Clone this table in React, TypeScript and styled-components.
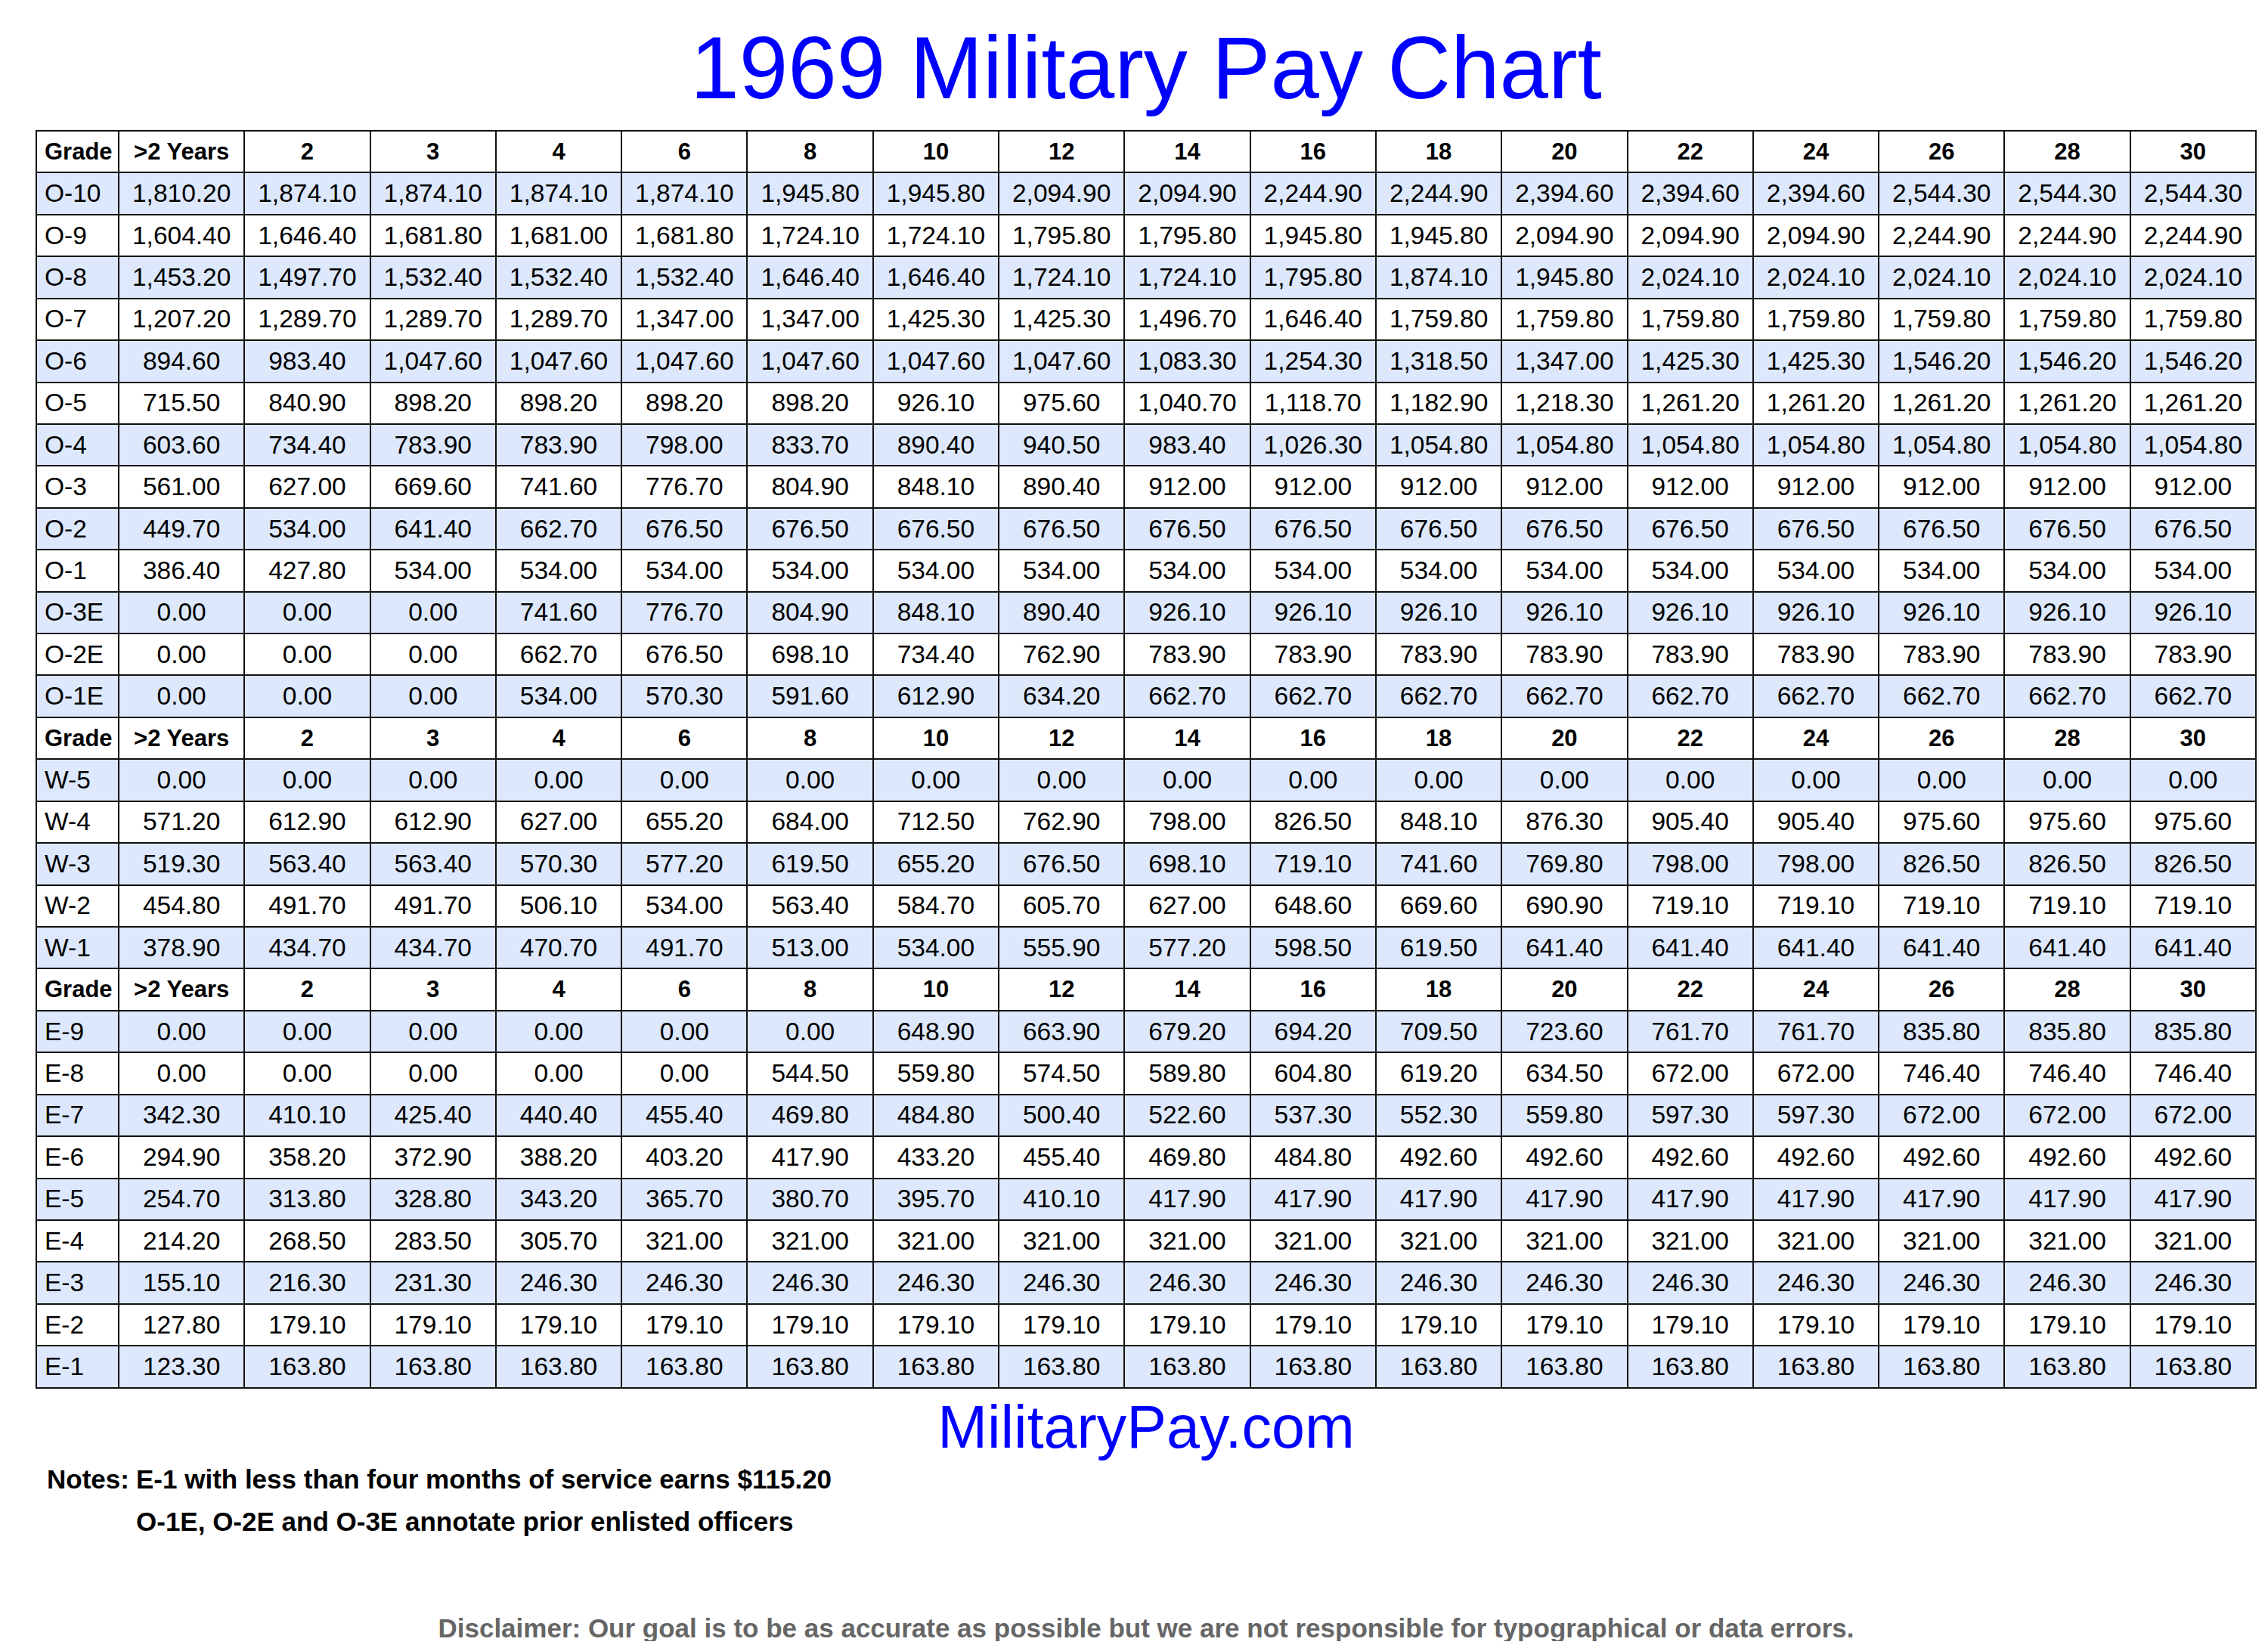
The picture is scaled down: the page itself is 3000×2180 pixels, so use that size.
import React from 'react';
import styled, { createGlobalStyle } from 'styled-components';

const GlobalStyle = createGlobalStyle`
    html, body {
        margin: 0;
        padding: 0;
        background: #fff;
    }
    body {
        font-family: "Liberation Sans", Arial, sans-serif;
        color: #000;
    }
`;

const Page = styled.div`
    width: 2938px;
    margin-left: 47px;
    padding-top: 32px;
`;

const Title = styled.h1`
    margin: 0 0 24px;
    font-size: 116px;
    line-height: 116px;
    font-weight: 400;
    text-align: center;
    color: #0000ff;
`;

const Chart = styled.div`
    border-top: 2px solid #111;
    border-left: 2px solid #111;
`;

const Row = styled.div<{ $shaded?: boolean }>`
    display: grid;
    grid-template-columns: 109px repeat(17, 1fr);
    height: 55.43px;
    box-sizing: border-box;
    border-bottom: 2px solid #111;
    background: ${p => (p.$shaded ? '#dde8fc' : '#fff')};
`;

const Cell = styled.div<{ $head?: boolean; $left?: boolean }>`
    display: flex;
    align-items: center;
    justify-content: ${p => (p.$left ? 'flex-start' : 'center')};
    padding-left: ${p => (p.$left ? '10px' : '0')};
    border-right: 2px solid #111;
    font-size: ${p => (p.$head ? '31px' : '33.5px')};
    font-weight: ${p => (p.$head ? 700 : 400)};
    white-space: nowrap;
    overflow: hidden;
`;

const Site = styled.div`
    margin-top: 11px;
    font-size: 79px;
    line-height: 79px;
    text-align: center;
    color: #0000ff;
`;

const Notes = styled.div`
    display: grid;
    grid-template-columns: 118px auto;
    margin: 2px 0 0 15px;
    font-size: 35px;
    line-height: 56px;
    font-weight: 700;
`;

const NoteLabel = styled.span`
    grid-row: 1 / span 2;
`;

const Disclaimer = styled.p`
    margin: 95px 0 0;
    font-size: 35px;
    line-height: 35px;
    font-weight: 700;
    text-align: center;
    color: #666;
`;

const YEARS = ['>2 Years', '2', '3', '4', '6', '8', '10', '12', '14', '16', '18', '20', '22', '24', '26', '28', '30'];

// pad a row out to 17 columns by repeating the last value
const fill = (vals: string[]) => {
    const out = [...vals];
    while (out.length < 17) out.push(vals[vals.length - 1]);
    return out;
};

type Section = { grade: string; pay: string[] }[];

const officers: Section = [
    { grade: 'O-10', pay: ['1,810.20', '1,874.10', '1,874.10', '1,874.10', '1,874.10', '1,945.80', '1,945.80', '2,094.90', '2,094.90', '2,244.90', '2,244.90', '2,394.60', '2,394.60', '2,394.60', '2,544.30', '2,544.30', '2,544.30'] },
    { grade: 'O-9', pay: ['1,604.40', '1,646.40', '1,681.80', '1,681.00', '1,681.80', '1,724.10', '1,724.10', '1,795.80', '1,795.80', '1,945.80', '1,945.80', '2,094.90', '2,094.90', '2,094.90', '2,244.90', '2,244.90', '2,244.90'] },
    { grade: 'O-8', pay: ['1,453.20', '1,497.70', '1,532.40', '1,532.40', '1,532.40', '1,646.40', '1,646.40', '1,724.10', '1,724.10', '1,795.80', '1,874.10', '1,945.80', '2,024.10'] },
    { grade: 'O-7', pay: ['1,207.20', '1,289.70', '1,289.70', '1,289.70', '1,347.00', '1,347.00', '1,425.30', '1,425.30', '1,496.70', '1,646.40', '1,759.80'] },
    { grade: 'O-6', pay: ['894.60', '983.40', '1,047.60', '1,047.60', '1,047.60', '1,047.60', '1,047.60', '1,047.60', '1,083.30', '1,254.30', '1,318.50', '1,347.00', '1,425.30', '1,425.30', '1,546.20'] },
    { grade: 'O-5', pay: ['715.50', '840.90', '898.20', '898.20', '898.20', '898.20', '926.10', '975.60', '1,040.70', '1,118.70', '1,182.90', '1,218.30', '1,261.20'] },
    { grade: 'O-4', pay: ['603.60', '734.40', '783.90', '783.90', '798.00', '833.70', '890.40', '940.50', '983.40', '1,026.30', '1,054.80'] },
    { grade: 'O-3', pay: ['561.00', '627.00', '669.60', '741.60', '776.70', '804.90', '848.10', '890.40', '912.00'] },
    { grade: 'O-2', pay: ['449.70', '534.00', '641.40', '662.70', '676.50'] },
    { grade: 'O-1', pay: ['386.40', '427.80', '534.00'] },
    { grade: 'O-3E', pay: ['0.00', '0.00', '0.00', '741.60', '776.70', '804.90', '848.10', '890.40', '926.10'] },
    { grade: 'O-2E', pay: ['0.00', '0.00', '0.00', '662.70', '676.50', '698.10', '734.40', '762.90', '783.90'] },
    { grade: 'O-1E', pay: ['0.00', '0.00', '0.00', '534.00', '570.30', '591.60', '612.90', '634.20', '662.70'] },
];

const warrants: Section = [
    { grade: 'W-5', pay: ['0.00'] },
    { grade: 'W-4', pay: ['571.20', '612.90', '612.90', '627.00', '655.20', '684.00', '712.50', '762.90', '798.00', '826.50', '848.10', '876.30', '905.40', '905.40', '975.60'] },
    { grade: 'W-3', pay: ['519.30', '563.40', '563.40', '570.30', '577.20', '619.50', '655.20', '676.50', '698.10', '719.10', '741.60', '769.80', '798.00', '798.00', '826.50'] },
    { grade: 'W-2', pay: ['454.80', '491.70', '491.70', '506.10', '534.00', '563.40', '584.70', '605.70', '627.00', '648.60', '669.60', '690.90', '719.10'] },
    { grade: 'W-1', pay: ['378.90', '434.70', '434.70', '470.70', '491.70', '513.00', '534.00', '555.90', '577.20', '598.50', '619.50', '641.40'] },
];

const enlisted: Section = [
    { grade: 'E-9', pay: ['0.00', '0.00', '0.00', '0.00', '0.00', '0.00', '648.90', '663.90', '679.20', '694.20', '709.50', '723.60', '761.70', '761.70', '835.80'] },
    { grade: 'E-8', pay: ['0.00', '0.00', '0.00', '0.00', '0.00', '544.50', '559.80', '574.50', '589.80', '604.80', '619.20', '634.50', '672.00', '672.00', '746.40'] },
    { grade: 'E-7', pay: ['342.30', '410.10', '425.40', '440.40', '455.40', '469.80', '484.80', '500.40', '522.60', '537.30', '552.30', '559.80', '597.30', '597.30', '672.00'] },
    { grade: 'E-6', pay: ['294.90', '358.20', '372.90', '388.20', '403.20', '417.90', '433.20', '455.40', '469.80', '484.80', '492.60'] },
    { grade: 'E-5', pay: ['254.70', '313.80', '328.80', '343.20', '365.70', '380.70', '395.70', '410.10', '417.90'] },
    { grade: 'E-4', pay: ['214.20', '268.50', '283.50', '305.70', '321.00'] },
    { grade: 'E-3', pay: ['155.10', '216.30', '231.30', '246.30'] },
    { grade: 'E-2', pay: ['127.80', '179.10'] },
    { grade: 'E-1', pay: ['123.30', '163.80'] },
];

const HeaderRow = () => (
    <Row>
        <Cell $head $left>Grade</Cell>
        {YEARS.map(y => <Cell key={y} $head>{y}</Cell>)}
    </Row>
);

const PaySection = ({ rows }: { rows: Section }) => (
    <>
        <HeaderRow />
        {rows.map((r, i) => (
            <Row key={r.grade} $shaded={i % 2 === 0}>
                <Cell $left>{r.grade}</Cell>
                {fill(r.pay).map((v, j) => <Cell key={j}>{v}</Cell>)}
            </Row>
        ))}
    </>
);

const App: React.FC = () => (
    <>
        <GlobalStyle />
        <Page>
            <Title>1969 Military Pay Chart</Title>
            <Chart>
                <PaySection rows={officers} />
                <PaySection rows={warrants} />
                <PaySection rows={enlisted} />
            </Chart>
            <Site>MilitaryPay.com</Site>
            <Notes>
                <NoteLabel>Notes:</NoteLabel>
                <span>E-1 with less than four months of service earns $115.20</span>
                <span>O-1E, O-2E and O-3E annotate prior enlisted officers</span>
            </Notes>
            <Disclaimer>
                Disclaimer: Our goal is to be as accurate as possible but we are not responsible for typographical or data errors.
            </Disclaimer>
        </Page>
    </>
);

export default App;
